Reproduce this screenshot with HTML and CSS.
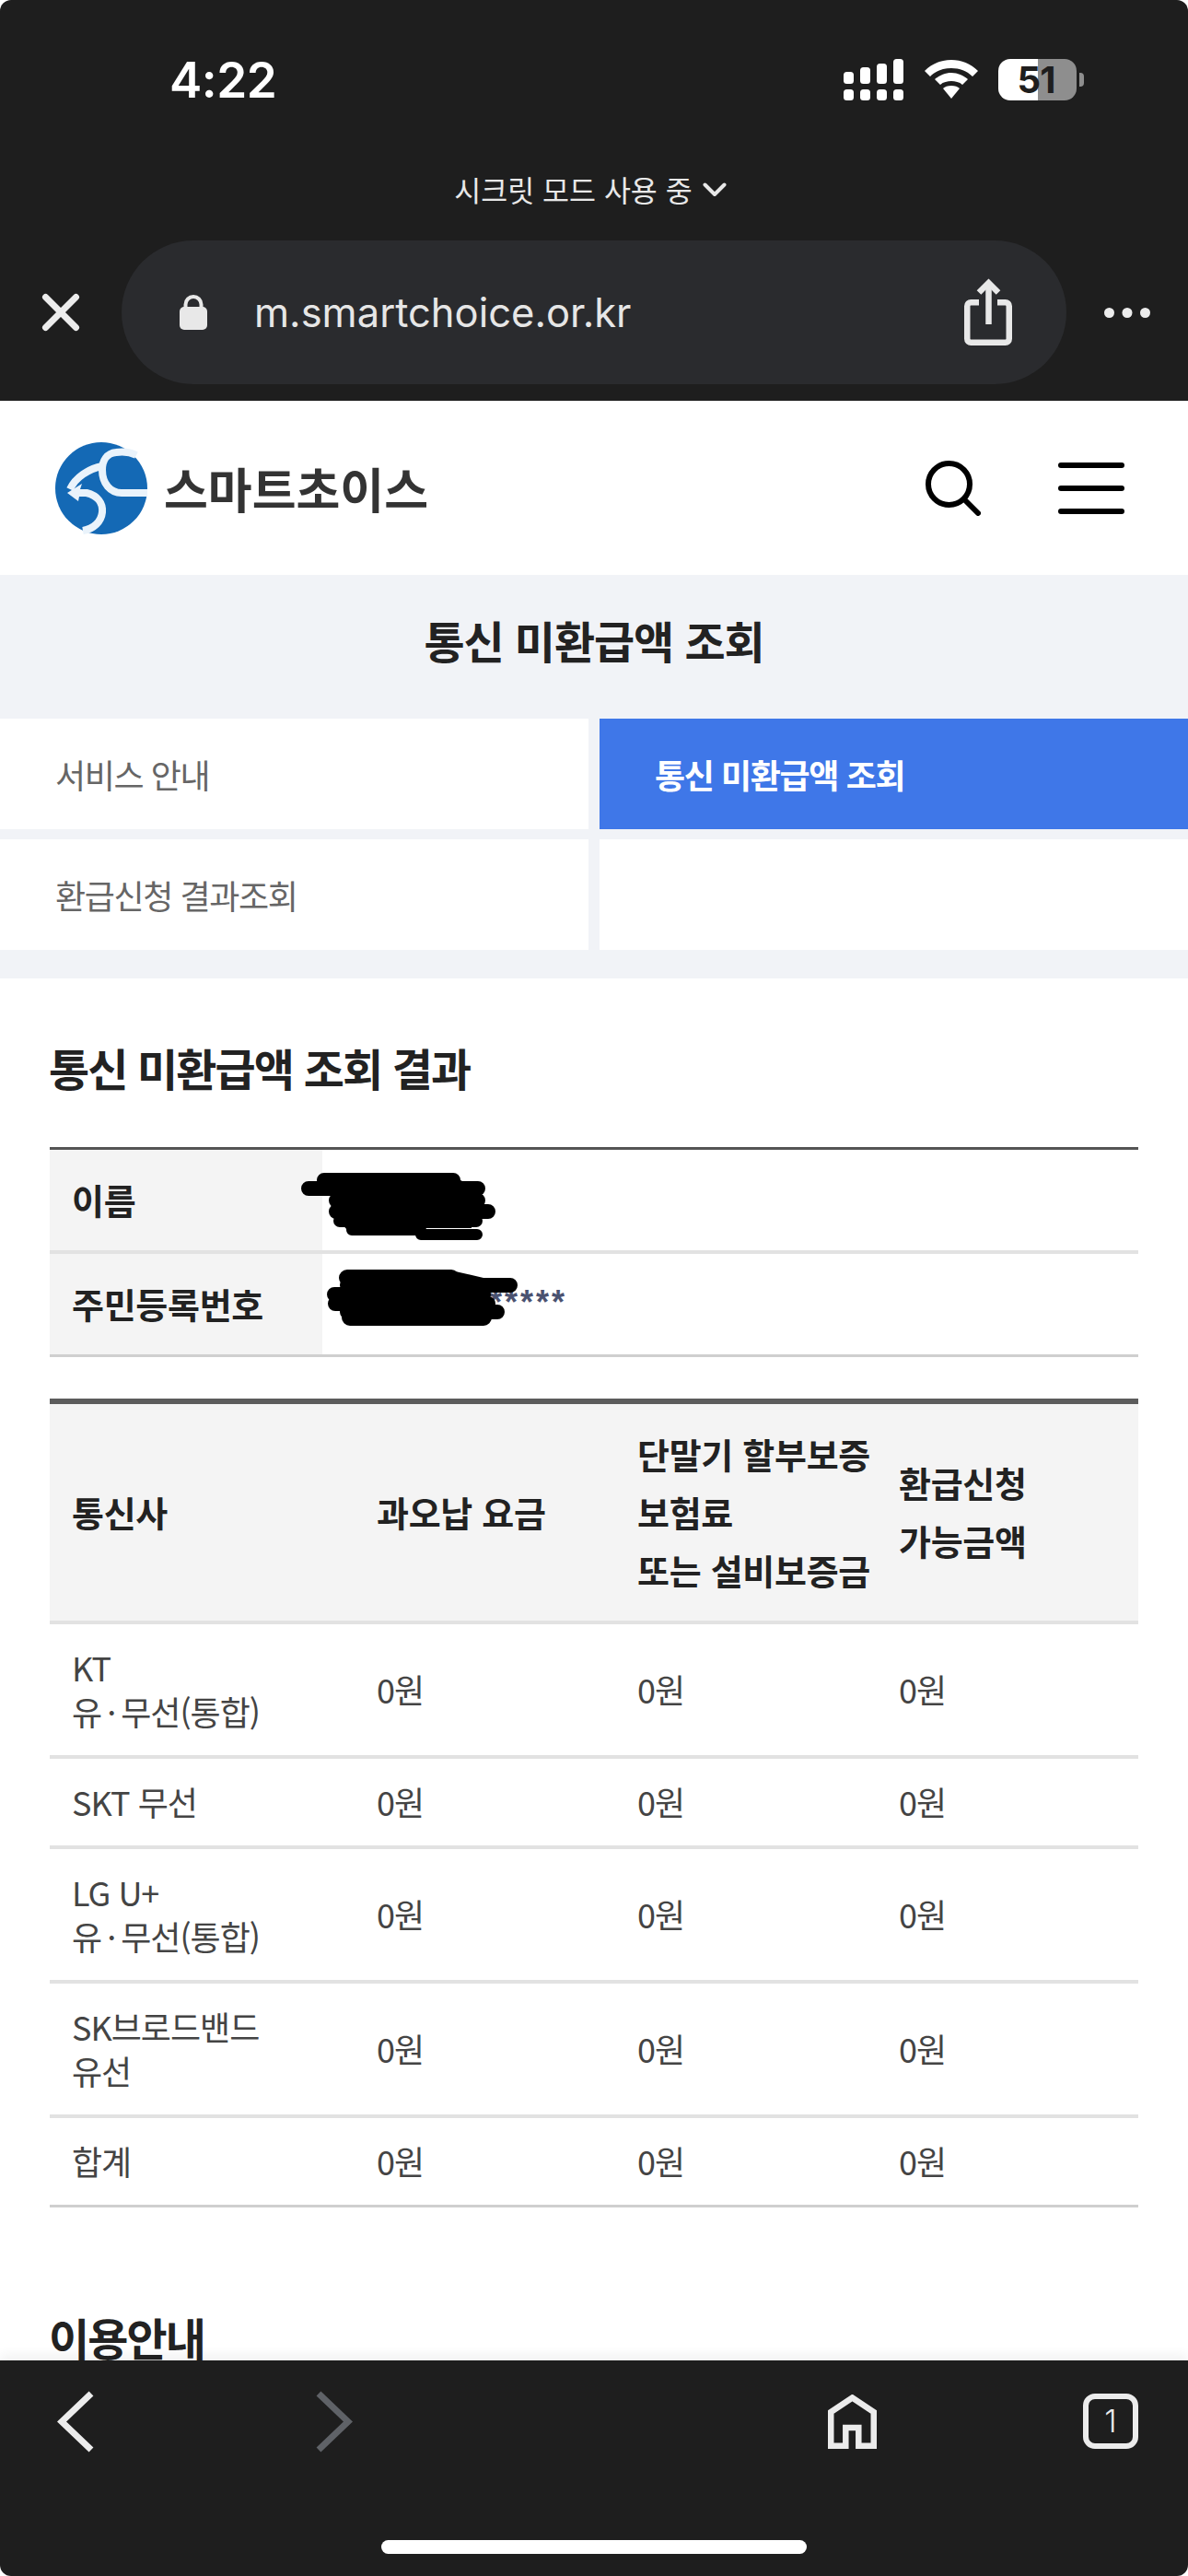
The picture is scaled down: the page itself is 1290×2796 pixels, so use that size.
FILE: index.html
```html
<!DOCTYPE html>
<html lang="ko">
<head>
<meta charset="utf-8">
<title>통신 미환급액 조회</title>
<link rel="stylesheet" href="styles.css">
</head>
<body>
<div class="screen">
  <header class="chrome">
    <div class="status">
      <span class="time">4:22</span>
      <div class="status-icons">
        <svg class="signal" width="65" height="45" viewBox="0 0 65 45" fill="#fff">
          <rect x="0" y="14" width="11" height="13" rx="3.5"/><rect x="18" y="9" width="11" height="18" rx="3.5"/><rect x="36" y="5" width="11" height="22" rx="3.5"/><rect x="54" y="0" width="11" height="27" rx="3.5"/>
          <rect x="0" y="33" width="11" height="12" rx="3.5"/><rect x="18" y="33" width="11" height="12" rx="3.5"/><rect x="36" y="33" width="11" height="12" rx="3.5"/><rect x="54" y="33" width="11" height="12" rx="3.5"/>
        </svg>
        <svg class="wifi" width="58" height="42" viewBox="0 0 58 42" fill="#fff">
          <path d="M29 0C18 0 8 4 0 12l6 6C12 12 20 9 29 9s17 3 23 9l6-6C50 4 40 0 29 0z"/>
          <path d="M29 14c-7 0-13 3-18 7l6 6c3-3 8-4 12-4s9 1 12 4l6-6c-5-4-11-7-18-7z"/>
          <path d="M29 28c-4 0-7 1-9 3l9 11 9-11c-2-2-5-3-9-3z"/>
        </svg>
        <div class="battery">
          <div class="batt-body"><span class="batt-num">51</span></div>
          <div class="batt-tip"></div>
        </div>
      </div>
    </div>
    <div class="incognito">
      <span>시크릿 모드 사용 중</span>
      <svg width="26" height="17" viewBox="0 0 26 17" fill="none" stroke="#e8e8e8" stroke-width="4" stroke-linecap="round" stroke-linejoin="round"><path d="M2.5 3.5L13 14 23.5 3.5"/></svg>
    </div>
    <div class="urlrow">
      <svg class="close" width="46" height="46" viewBox="0 0 46 46" fill="none" stroke="#ececec" stroke-width="7" stroke-linecap="round"><path d="M6.500 6.500l33 33M39.500 6.500l-33 33"/></svg>
      <div class="pill">
        <svg class="lock" width="30" height="38" viewBox="0 0 30 38"><path d="M6.500 16V10.500a8.500 8.500 0 0 1 17 0V16" fill="none" stroke="#e8e8e8" stroke-width="4"/><rect x="0" y="13" width="30" height="25" rx="5" fill="#e8e8e8"/></svg>
        <span class="url">m.smartchoice.or.kr</span>
        <svg class="share" width="54" height="74" viewBox="0 0 54 74" fill="none" stroke="#e8e8e8" stroke-width="6.500" stroke-linejoin="round"><path d="M17 26.250H8.250a4 4 0 0 0-4 4V65.750a4 4 0 0 0 4 4H45.750a4 4 0 0 0 4-4V30.250a4 4 0 0 0-4-4H37"/><path d="M27.500 50V4"/><path d="M17 15.500L27.500 5 38 15.500" stroke-linejoin="miter"/></svg>
      </div>
      <svg class="more" width="50" height="11" viewBox="0 0 50 11" fill="#ececec"><circle cx="5.500" cy="5.500" r="5.500"/><circle cx="25" cy="5.500" r="5.500"/><circle cx="44.500" cy="5.500" r="5.500"/></svg>
    </div>
  </header>

  <main class="page">
    <div class="sitebar">
      <div class="logo">
        <svg width="100" height="100" viewBox="0 0 100 100">
          <circle cx="50" cy="50" r="50" fill="#1469b5"/>
          <path d="M88 14C80 10 72 10 66 11 56 12 51 20 51 30 51 45 60 55 72 55H100" fill="none" stroke="#eaf3fb" stroke-width="8"/>
          <path d="M51 26C36 29 22 38 16 51" fill="none" stroke="#eaf3fb" stroke-width="8"/>
          <path d="M24 55H34C46 58 52 66 51 76 50 86 42 94 30 96" fill="none" stroke="#eaf3fb" stroke-width="8"/>
          <path d="M13 55L29 45 27 51 34 53 33 59 26 59 25 64z" fill="#eaf3fb"/>
        </svg>
        <span class="logo-text">스마트초이스</span>
      </div>
      <div class="site-actions">
        <svg width="60" height="60" viewBox="0 0 60 60" fill="none" stroke="#000" stroke-width="6" stroke-linecap="round"><circle cx="25.500" cy="25.500" r="22.500"/><path d="M42 42l15 15"/></svg>
        <div class="burger"><i></i><i></i><i></i></div>
      </div>
    </div>

    <div class="subhead">
      <h1>통신 미환급액 조회</h1>
      <div class="tabs">
        <div class="tab">서비스 안내</div>
        <div class="tab active">통신 미환급액 조회</div>
        <div class="tab">환급신청 결과조회</div>
        <div class="tab"></div>
      </div>
    </div>

    <section class="content">
      <h2 class="result-title">통신 미환급액 조회 결과</h2>
      <div class="info">
        <div class="info-row">
          <div class="info-th">이름</div>
          <div class="info-td">
            <svg class="scribble s1" width="212" height="74" viewBox="0 0 212 74" fill="none" stroke="#000" stroke-linecap="round">
              <path d="M40 4H165L185 14V60H130V62H50L35 45V25H10L25 8z" fill="#000" stroke="none"/>
              <path stroke-width="16" d="M25 8H165M8 17H192M38 30H192M38 42H203"/>
              <path stroke-width="14" d="M42 52H190"/>
              <path stroke-width="12" d="M55 62H130M130 67H191"/>
            </svg>
          </div>
        </div>
        <div class="info-row last">
          <div class="info-th">주민등록번호</div>
          <div class="info-td">
            <span class="stars">******</span>
            <svg class="scribble s2" width="210" height="64" viewBox="0 0 210 64" fill="none" stroke="#000" stroke-linecap="round">
              <path d="M30 1H135L170 9V58H30z" fill="#000" stroke="none"/>
              <path stroke-width="18" d="M22 9H135M25 52H170"/>
              <path stroke-width="16" d="M22 17H199M8 27H170M9 37H175M22 46H185"/>
            </svg>
          </div>
        </div>
      </div>

      <table class="refund">
        <thead>
          <tr>
            <th class="c1">통신사</th>
            <th class="c2">과오납 요금</th>
            <th class="c3">단말기 할부보증<br>보험료<br>또는 설비보증금</th>
            <th class="c4">환급신청<br>가능금액</th>
          </tr>
        </thead>
        <tbody>
          <tr class="tall"><td>KT<br>유<span class="dot">·</span>무선(통합)</td><td>0원</td><td>0원</td><td>0원</td></tr>
          <tr class="short"><td>SKT 무선</td><td>0원</td><td>0원</td><td>0원</td></tr>
          <tr class="tall"><td>LG U+<br>유<span class="dot">·</span>무선(통합)</td><td>0원</td><td>0원</td><td>0원</td></tr>
          <tr class="tall"><td>SK브로드밴드<br>유선</td><td>0원</td><td>0원</td><td>0원</td></tr>
          <tr class="total"><td>합계</td><td>0원</td><td>0원</td><td>0원</td></tr>
        </tbody>
      </table>

      <h2 class="guide">이용안내</h2>
    </section>
  </main>

  <footer class="toolbar">
    <div class="tools">
      <svg width="40" height="67" viewBox="0 0 40 67" fill="none" stroke="#ececec" stroke-width="7" stroke-linejoin="miter"><path d="M37 3L5 33.500 37 64"/></svg>
      <svg class="fwd" width="40" height="67" viewBox="0 0 40 67" fill="none" stroke="#5f6267" stroke-width="7" stroke-linejoin="miter"><path d="M3 3L35 33.500 3 64"/></svg>
      <svg class="home" width="53" height="59" viewBox="0 0 53 59" fill="none" stroke="#ececec" stroke-width="6.500" stroke-linejoin="miter"><path d="M3.250 19L26.500 3.500 49.750 19V55.750H33.300V36H19.300V55.750H3.250z"/></svg>
      <div class="tabcount">1</div>
    </div>
    <div class="homebar"></div>
  </footer>
</div>
</body>
</html>
```

FILE: styles.css
```css
* { box-sizing: border-box; }
html, body { margin: 0; padding: 0; background: #fff; }
body { font-family: "Noto Sans CJK KR", "Noto Sans", sans-serif; }
.screen { width: 1290px; height: 2796px; position: relative; overflow: hidden; display: flex; flex-direction: column; background: #fff; border-radius: 12px; }

.chrome { height: 435px; background: #1e1e1e; flex: none; color: #fff; }
.status { height: 190px; padding: 0 113px 0 184px; display: flex; justify-content: space-between; }
.time { font: 600 53px/56px Inter, sans-serif; margin-top: 59px; letter-spacing: -0.5px; }
.status-icons { display: flex; align-items: flex-start; margin-top: 64px; }
.wifi { margin-left: 23px; margin-top: 1px; }
.battery { display: flex; align-items: center; margin-left: 22px; }
.batt-body { width: 85px; height: 45px; border-radius: 13px; background: linear-gradient(90deg, #fff 0 43px, #8e8e8e 43px 100%); display: flex; align-items: center; justify-content: center; }
.batt-num { font: 700 40px/45px Inter, sans-serif; color: #1e1e1e; letter-spacing: -1px; margin-right: 3px; }
.batt-tip { width: 5px; height: 15px; margin-left: 3px; border-radius: 0 4px 4px 0; background: #8e8e8e; }

.incognito { height: 30px; margin-top: 0; display: flex; justify-content: center; align-items: center; gap: 11px; font-size: 31.5px; color: #e8e8e8; padding-right: 8px; }

.urlrow { height: 156px; margin-top: 41px; display: flex; align-items: center; padding-left: 43px; }
.pill { width: 1026px; height: 156px; margin-left: 43px; background: #2a2b2e; border-radius: 78px; display: flex; align-items: center; padding-left: 63px; padding-right: 58px; }
.url { font: 400 43.5px/50px Inter, sans-serif; color: #e6e6e6; margin-left: 51px; flex: 1; }
.more { margin-left: 41px; }

.page { flex: 1; min-height: 0; overflow: hidden; }
.sitebar { height: 189px; display: flex; justify-content: space-between; align-items: center; padding: 0 69px 0 60px; background: #fff; }
.logo { display: flex; align-items: center; gap: 18px; }
.logo-text { font-size: 52px; font-weight: 700; color: #333; line-height: 1; }
.site-actions { display: flex; align-items: center; gap: 84px; }
.burger { width: 72px; display: flex; flex-direction: column; gap: 19px; }
.burger i { display: block; height: 6px; background: #000; border-radius: 3px; }

.subhead { background: #f1f3f7; height: 438px; }
.subhead h1 { margin: 0; height: 156px; padding-bottom: 16px; display: flex; align-items: center; justify-content: center; font-size: 48px; font-weight: 700; color: #222; letter-spacing: -1.1px; }
.tabs { display: grid; grid-template-columns: 639px 639px; column-gap: 12px; row-gap: 11px; }
.tab { height: 120px; background: #fff; display: flex; align-items: center; padding-left: 60px; font-size: 36px; letter-spacing: -1.4px; color: #666; }
.tab.active { background: #3f77e8; color: #fff; font-weight: 700; }

.content { padding: 0 54px; }
h2 { margin: 0; font-size: 48px; font-weight: 700; color: #222; line-height: 60px; letter-spacing: -1.9px; text-indent: -1px; }
.result-title { padding-top: 66px; height: 183px; }
.info { border-top: 3px solid #555; }
.info-row { display: flex; height: 113px; border-bottom: 4px solid #e2e2e2; }
.info-row.last { height: 112px; border-bottom: 3px solid #cfcfcf; }
.info-th { width: 296px; background: #f4f4f4; display: flex; align-items: center; padding: 0 0 3px 24px; font-size: 38px; font-weight: 700; color: #222; letter-spacing: -0.3px; }
.info-td { flex: 1; position: relative; display: flex; align-items: center; }
.scribble { position: absolute; }
.s1 { left: -23px; top: 25px; }
.s2 { left: 5px; top: 17px; }
.stars { padding-left: 164px; margin-bottom: 3px; font: 700 36px/60px "Liberation Sans", sans-serif; color: #4a5270; letter-spacing: 3px; }

.refund { width: 1182px; margin-top: 45px; border-collapse: separate; border-spacing: 0; table-layout: fixed; }
.refund th { background: #f4f4f4; height: 245px; font-size: 38px; font-weight: 700; color: #222; text-align: left; line-height: 63px; padding: 0 0 3px 24px; border-top: 6px solid #5c5c5c; border-bottom: 4px solid #e2e2e2; letter-spacing: -0.3px; white-space: nowrap; }
.refund td { font-size: 36px; color: #444; line-height: 48px; padding: 0 0 3px 24px; border-bottom: 4px solid #e2e2e2; letter-spacing: -1px; }
.dot { margin: 0 6px; }
.tall td { height: 146px; }
.short td { height: 98px; }
.total td { height: 97px; border-bottom: 3px solid #cfcfcf; }
.c1 { width: 331px; }
.c2 { width: 283px; }
.c3 { width: 284px; }
.c4 { width: 284px; }
.guide { margin-top: 110px; }

.toolbar { position: absolute; left: 0; right: 0; bottom: 0; height: 234px; background: #1e1e1e; box-shadow: 0 -6px 12px rgba(0,0,0,0.06); }
.tools { height: 186px; padding: 33px 0 0 62px; display: flex; align-items: flex-start; }
.fwd { margin-left: 241px; }
.home { margin-left: 516px; margin-top: 4px; }
.tabcount { width: 60px; height: 60px; margin-left: 224px; margin-top: 3px; border: 6.5px solid #ececec; border-radius: 13px; color: #ececec; font: 300 34px/1 Inter, sans-serif; display: flex; align-items: center; justify-content: center; }
.homebar { width: 462px; height: 15px; margin: 9px auto 0; background: #fff; border-radius: 8px; }
```
